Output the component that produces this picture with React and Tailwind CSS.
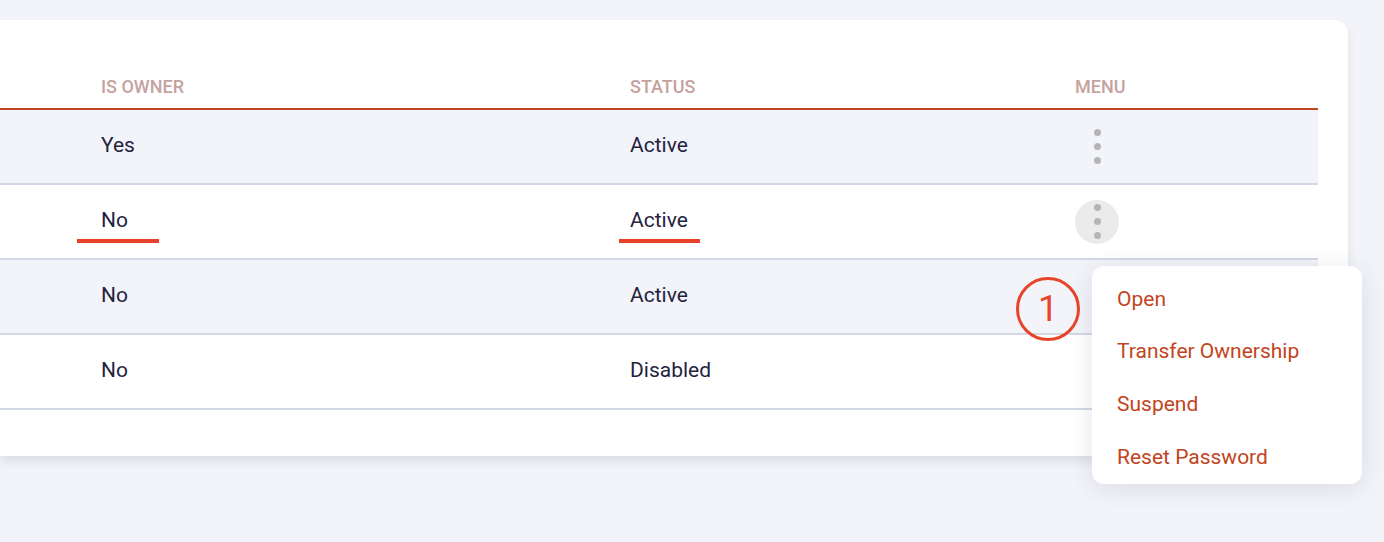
import React from "react";

const rows = [
  { owner: "Yes", status: "Active", bg: "bg-[#f3f4f9]", active: false, marked: false },
  { owner: "No", status: "Active", bg: "bg-white", active: true, marked: true },
  { owner: "No", status: "Active", bg: "bg-[#f3f4f9]", active: false, marked: false },
  { owner: "No", status: "Disabled", bg: "bg-white", active: false, marked: false },
];

function Dots({ active }) {
  return (
    <div
      className={`flex h-[44px] w-[44px] flex-col items-center justify-center gap-[7px] rounded-full ${
        active ? "bg-[#ebebeb]" : ""
      }`}
    >
      <span className="h-[7px] w-[7px] rounded-full bg-[#b5b5b5]" />
      <span className="h-[7px] w-[7px] rounded-full bg-[#b5b5b5]" />
      <span className="h-[7px] w-[7px] rounded-full bg-[#b5b5b5]" />
    </div>
  );
}

export default function App() {
  return (
    <div
      className="relative h-[542px] w-[1384px] overflow-hidden bg-[#f3f4f9] pt-[20px]"
      style={{ fontFamily: "Roboto, 'Liberation Sans', sans-serif" }}
    >
      <div className="h-[436px] w-[1348px] rounded-r-[14px] bg-white pr-[30px] pt-[46px] shadow-[0_6px_10px_rgba(40,45,80,0.10)]">
        <div className="grid h-[44px] grid-cols-[101px_529px_445px_1fr] items-center border-b-2 border-[#c2461f] pb-[2px] text-[18px] font-medium uppercase text-[#c6a29e]">
          <div />
          <div>Is Owner</div>
          <div>Status</div>
          <div>Menu</div>
        </div>
        {rows.map((r, i) => (
          <div
            key={i}
            className={`grid h-[75px] grid-cols-[101px_529px_445px_1fr] items-center border-b-2 border-[#d2d8e6] text-[21px] text-[#24233f] ${r.bg}`}
          >
            <div />
            <div className="relative pb-[1px]">
              {r.owner}
              {r.marked && (
                <span className="absolute left-[-24px] top-[34px] h-[4px] w-[82px] bg-[#e8432a]" />
              )}
            </div>
            <div className="relative pb-[1px]">
              {r.status}
              {r.marked && (
                <span className="absolute left-[-11px] top-[34px] h-[4px] w-[81px] bg-[#e8432a]" />
              )}
            </div>
            <div className="flex items-center">
              {i < 2 && <Dots active={r.active} />}
            </div>
          </div>
        ))}
      </div>

      <div className="absolute left-[1016px] top-[277px] flex h-[64px] w-[64px] items-center justify-center rounded-full border-[3px] border-[#e8442a] text-[36px] leading-none text-[#e8442a]">
        1
      </div>

      <div className="absolute left-[1092px] top-[266px] flex h-[218px] w-[270px] flex-col rounded-[12px] bg-white pl-[25px] pt-[7px] text-[21px] text-[#c2441c] shadow-[0_4px_24px_rgba(40,45,90,0.12)]">
        <div className="flex h-[53px] items-center">Open</div>
        <div className="flex h-[53px] items-center">Transfer Ownership</div>
        <div className="flex h-[53px] items-center">Suspend</div>
        <div className="flex h-[53px] items-center">Reset Password</div>
      </div>
    </div>
  );
}
